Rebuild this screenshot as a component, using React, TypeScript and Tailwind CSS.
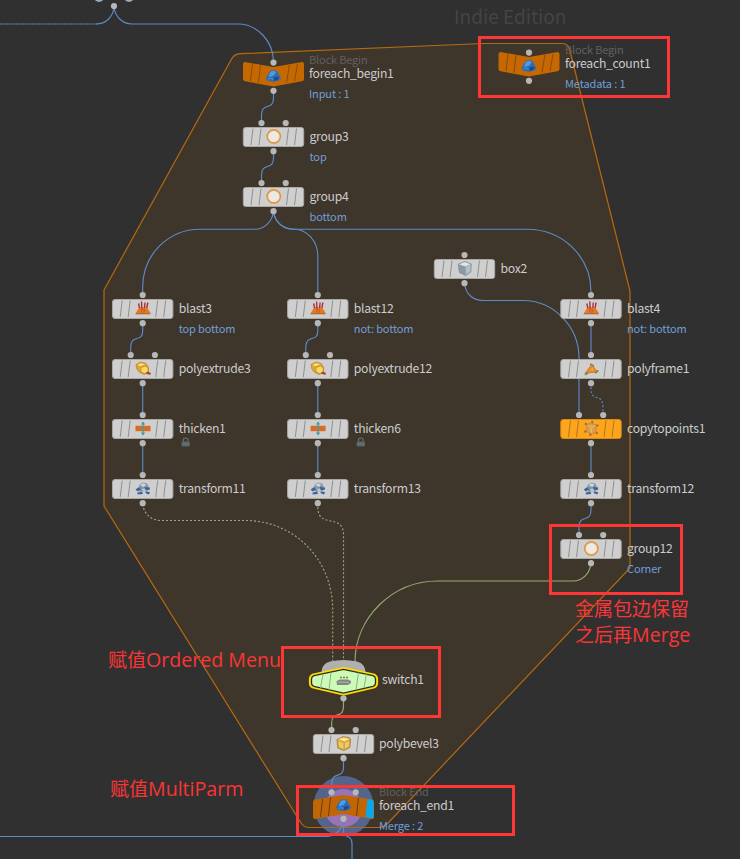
import React from "react";

type Kind = "group" | "blast" | "extrude" | "thicken" | "transform" | "box" | "frame" | "copy" | "bevel";
type NodeInfo = { name: string; x: number; y: number; kind: Kind; ins: number; note?: string; lock?: boolean };

const nodes: NodeInfo[] = [
  { name: "group3", x: 273.5, y: 137, kind: "group", ins: 2, note: "top" },
  { name: "group4", x: 273.5, y: 197, kind: "group", ins: 2, note: "bottom" },
  { name: "blast3", x: 142.7, y: 309, kind: "blast", ins: 1, note: "top bottom" },
  { name: "polyextrude3", x: 142.7, y: 369, kind: "extrude", ins: 2 },
  { name: "thicken1", x: 142.7, y: 429, kind: "thicken", ins: 1, lock: true },
  { name: "transform11", x: 142.7, y: 489, kind: "transform", ins: 1 },
  { name: "blast12", x: 317.8, y: 309, kind: "blast", ins: 1, note: "not: bottom" },
  { name: "polyextrude12", x: 317.8, y: 369, kind: "extrude", ins: 2 },
  { name: "thicken6", x: 317.8, y: 429, kind: "thicken", ins: 1, lock: true },
  { name: "transform13", x: 317.8, y: 489, kind: "transform", ins: 1 },
  { name: "box2", x: 464.5, y: 269, kind: "box", ins: 1 },
  { name: "blast4", x: 591, y: 309, kind: "blast", ins: 1, note: "not: bottom" },
  { name: "polyframe1", x: 591, y: 369, kind: "frame", ins: 1 },
  { name: "copytopoints1", x: 591, y: 429, kind: "copy", ins: 2 },
  { name: "transform12", x: 591, y: 489, kind: "transform", ins: 1 },
  { name: "group12", x: 591, y: 549, kind: "group", ins: 2, note: "Corner" },
  { name: "polybevel3", x: 343.5, y: 744, kind: "bevel", ins: 2 },
];

const blueWires = [
  "M114 7C113 17 106 24 96 24",
  "M114 7C115 17 123 24 132 24H238C258 24 273.5 42 273.5 62",
  "M273.5 91V98C273.5 111 261.5 102 261.5 115V123",
  "M273.5 151V158C273.5 171 261.5 162 261.5 175V183",
  "M273.5 212C272 222 264 229.2 255 229.2H200C168 229.2 142.7 255 142.7 287V295",
  "M273.5 212C275 222 283 229 293 229C307 229 317.8 241 317.8 256V295",
  "M273.5 212C275 222 283 229.2 293 229.2H527C562 229.2 591 256 591 292",
  "M142.7 323V331C142.7 343 130.7 334 130.7 347V355",
  "M317.8 323V331C317.8 343 305.8 334 305.8 347V355",
  "M142.7 383V415", "M142.7 443V475", "M317.8 383V415", "M317.8 443V475",
  "M464.5 284C466 294 473 300.5 483 300.5H523C554 300.5 579 327 579 358V415",
  "M591 323V355", "M591 443V475",
  "M591 503V510C591 523 579 514 579 527V535",
];

const red = "absolute border-[3px] border-[#ff3636]";
const note = "absolute whitespace-nowrap leading-[26px] text-[#fa3535] font-['Open_Sans','Noto_Sans_CJK_SC',sans-serif]";

function Dot({ x, y }: { x: number; y: number }) {
  return <circle cx={x} cy={y} r="3.1" fill="#b7b7b7" />;
}

function Glyph({ kind }: { kind: Kind }) {
  switch (kind) {
    case "group":
      return <><circle r="6.5" fill="#ede9e3" stroke="#dc9a48" strokeWidth="1.9" /><circle r="5.3" fill="none" stroke="#f3dfc8" strokeWidth=".7" /></>;
    case "blast":
      return <>
        <path d="M-7.5 5L-4-1L-1-1.5L1-1L4-1L7.5 4.5L6.5 5.5H-7Z" fill="#e17926" />
        <path d="M-3.5-.5L-4.5-5M-1.2 0L-1.5-7M1.5-.5L2-6M3.8-.5L4.8-6" stroke="#a8323a" strokeWidth="1.4" />
        <path d="M-1.5 3.5V1H1.5V3.5Z" fill="none" stroke="#c0592c" strokeWidth=".8" />
        <path d="M-7.5 5.3H7.5" stroke="#ad5b28" strokeWidth=".9" />
      </>;
    case "extrude":
      return <>
        <path d="M-7-4L-2-6.5L3-5L5.5-1V4L1 6L-4 3.5L-6.5 0Z" fill="#e3a52c" stroke="#ad8029" strokeWidth=".7" />
        <path d="M-2-1L3-2.5L5 0V4L1 5L-2 3Z" fill="#fbd96d" stroke="#b68425" strokeWidth=".6" />
        <path d="M-5.5-3.5L-2-5.2L2-4.2L-2.5-2.5Z" fill="#ffe391" />
        <path d="M3.5 4L7.5 5.5" stroke="#a63d2b" strokeWidth="2.4" />
      </>;
    case "thicken":
      return <>
        <rect x="-7.5" y="-2.7" width="15" height="5.4" fill="#dc6b20" />
        <rect x="-3.5" y="-1.7" width="7" height="3.4" fill="#b77842" />
        <path d="M0-6V6" stroke="#6a9087" strokeWidth="1.4" />
        <path d="M-2.2-4L0-7L2.2-4ZM-2.2 4L0 7L2.2 4Z" fill="#42a0a3" />
      </>;
    case "transform":
      return <>
        <path d="M-4.5 1L-3.5-4L0-6L4-5L5.5-2L4.5 3L-3 3Z" fill="#8497aa" />
        <path d="M-3-3.5L0-5.2L3-4L1-1.5Z" fill="#ced8dc" />
        <path d="M-7.5 1L-4-1.5L-2 1L-5.5 3ZM1.5-1.5L7-1L6.5 1.5L2 1.5ZM-5.5 4L-1 3L0 5.5L-5.5 6ZM2 3L7 3.5L6 6L3 5Z" fill="#3e6597" />
        <path d="M-1 .5L2 0L3 3L0 3Z" fill="#b9c9d6" />
      </>;
    case "box":
      return <>
        <path d="M-6.5-4.5L0-7L6.5-4.5L6 3.5L1 7L-5.5 4Z" fill="#8b99a5" stroke="#7b8991" strokeWidth=".7" />
        <path d="M-5.8-4.3L0-6.4L5.8-4.3L.5-2Z" fill="#dfe5e7" />
        <path d="M.8-1.5L6-4L5.5 3.2L1 6.2Z" fill="#b4bfc7" />
      </>;
    case "frame":
      return <>
        <path d="M-6.5 6L-3 4.5M-1-4.5L2.5-2M3.5 4.5L7 2" stroke="#668745" strokeWidth="1.8" />
        <path d="M-6 4.5L.5-4L6 3.5Z" fill="#e98a2b" stroke="#b9752f" strokeWidth=".8" />
        <path d="M-1 2L1-1.5L3 2Z" fill="#f3a346" />
      </>;
    case "copy":
      return <>
        <path d="M-4.5-4L0-5.5L5-3.5L4.5 4L0 5.5L-4.5 3Z" fill="#dc9f45" stroke="#b98140" strokeWidth=".8" />
        <path d="M-3.5-3L0-1.5L4-2.8M0-1V4.5" stroke="#efbb6a" fill="none" />
        {[[-5.5, -4.5], [1, -6.5], [6, -3], [5.5, 4.5], [-1, 6.3], [-6, 3]].map(([x, y]) => <circle key={`${x}${y}`} cx={x} cy={y} r="1.2" fill="#9a7440" />)}
      </>;
    case "bevel":
      return <>
        <path d="M-6.8-4L-1-6.8L5.5-6L6.8-4L6 4L0 7L-6 4.5Z" fill="#d5a744" stroke="#a07f3a" strokeWidth=".9" />
        <path d="M-5.8-4.2L0-6L5.6-4.6L.8-2Z" fill="#fbe394" />
        <path d="M-5.3-2.3L-.5-.4L-.5 5.4L-4.8 3.4ZM1.2-.4L5.5-2.6L4.8 3L1.2 5.2Z" fill="#efc868" />
      </>;
  }
}

function Rock() {
  return <>
    <path d="M-7.5 2.5L-5.5-1.5L-3-5L1-6L4-4L5.5-1L7.5 2.5L5 5L0 6L-6 5Z" fill="#2b6cba" />
    <path d="M-3-4L1-5.2L2.5-3L0 0L-5 1.5L-4-1.5Z" fill="#5598dc" />
    <path d="M1 1.5L5.5 1L4 4.2L0 5Z" fill="#1d4788" />
    <path d="M-5.5 3.5L-1.5 2.5L-.5 4.5" stroke="#4e8fd2" fill="none" />
  </>;
}

function Stripes({ color }: { color: string }) {
  return <path d="M-20.5-8.5L-22.5 8M-12.5-8.5L-14.5 8M15-8.5L13 8M23-8.5L21 8" stroke={color} strokeWidth="1" fill="none" />;
}

function BlockBegin({ x, y }: { x: number; y: number }) {
  return <>
    <g transform={`translate(${x} ${y})`}>
      <path d="M-28.5-12L0-7L28.5-12Q30.5-12 30.5-10V5Q30.5 7 28.5 7.3L0 12.4L-28.5 7.3Q-30.5 7-30.5 5V-10Q-30.5-12-28.5-12Z" fill="#c56800" />
      <path d="M-21-10L-23 7M-13-9L-15 8.5M16-9L13 8.5M24-10L21 7" stroke="#8a4b0b" strokeWidth="1" />
      <g transform="translate(0 1.7)"><Rock /></g>
    </g>
    <Dot x={x} y={y - 11.4} /><Dot x={x} y={y + 16.8} />
  </>;
}

function GraphNode({ n }: { n: NodeInfo }) {
  const orange = n.kind === "copy";
  return <>
    <g transform={`translate(${n.x} ${n.y})`}>
      <rect x="-30.2" y="-9.5" width="60.4" height="19" rx="2.5" fill={orange ? "#ffa51b" : "#cfcfcf"} stroke={orange ? "#d88b16" : "#aaa7a4"} strokeWidth="1" />
      <Stripes color={orange ? "#ad761f" : "#8f8f8f"} />
      <g transform="translate(.3 -.5)"><Glyph kind={n.kind} /></g>
    </g>
    {n.ins === 1 ? <Dot x={n.x} y={n.y - 14} /> : <><Dot x={n.x - 12} y={n.y - 14} /><Dot x={n.x + 12.2} y={n.y - 14} /></>}
    <Dot x={n.x} y={n.y + 14.2} />
  </>;
}

function Label({ x, y, name, tag, info }: { x: number; y: number; name: string; tag?: string; info?: string }) {
  return <div className="absolute flex flex-col whitespace-nowrap font-['Noto_Sans_CJK_SC',sans-serif]" style={{ left: x, top: y }}>
    {tag && <span className="text-[11px] leading-[13px] tracking-[-0.17px] text-[#606060]">{tag}</span>}
    <span className="text-[12.2px] leading-[14px] tracking-[-0.26px] text-[#cccccc]">{name}</span>
    {info && <span className="mt-[6px] text-[11px] leading-[14px] tracking-[-0.13px] text-[#719fd8]">{info}</span>}
  </div>;
}

export default function App() {
  return <main className="relative h-[859px] w-[740px] overflow-hidden bg-[#303030]">
    <div className="absolute left-[454px] top-[2px] whitespace-nowrap font-['Noto_Sans_CJK_SC',sans-serif] text-[19px] leading-[28px] text-[#444444]">Indie Edition</div>

    <svg className="absolute inset-0" width="740" height="859" viewBox="0 0 740 859" fill="none">
      <path d="M104 290L231 60Q234 54 240 53.7L483 43.5H562Q568 43.5 569.5 49L630 291V568L389 822Q384 827.5 379 827.5H309Q304 827.5 301 823L104 506Z" fill="#3e352b" stroke="#b7690f" strokeWidth="1.2" />
      <circle cx="343.5" cy="806" r="30" fill="#53658d" />
      <circle cx="343.5" cy="808" r="19" fill="#9873b5" />
      <path d="M309 827.5H379" stroke="#b7690f" strokeWidth="1.2" />
      <g stroke="#5d8bc5" strokeWidth="1.15">
        {blueWires.map((d) => <path key={d} d={d} />)}
        <path d="M0 24H97" strokeDasharray="2.5 .7" />
        <path d="M591 383V388C591 404 603 391 603 408V415" strokeDasharray="2 2" />
        <path d="M343.5 758V767C343.5 780 331.7 770 331.7 784V792" />
        <path d="M343.5 820C342 830 335 836.5 326 836.5H0M343.5 820V832C343.5 838 352 834 352 844V859" />
      </g>
      <g stroke="#93ad71" strokeWidth="1.15">
        <path d="M142.7 504C144 514 151 520.5 161 520.5H245C295 520.5 332.7 560 332.7 610V662M317.8 503V507C318 530 343.5 512 343.5 535V662" strokeDasharray="2 2" />
        <path d="M591 563C590 574 582 581 573 581H438C392 581 355 618 355 662M343.5 698V706C343.5 720 331.7 710 331.7 723V730" />
      </g>
      <circle cx="99" cy="-3" r="5" fill="#94adba" /><circle cx="129" cy="-3" r="5" fill="#94adba" />
      <Dot x={114} y={6} />

      <BlockBegin x={273.5} y={74} />
      <BlockBegin x={529} y={64} />
      {nodes.map((n) => <GraphNode key={n.name} n={n} />)}

      {nodes.filter((n) => n.lock).map((n) => <g key={n.name} transform={`translate(${n.x + 43} 442)`}>
        <path d="M-2.3-.5V-2Q-2.3-4 0-4Q2.3-4 2.3-2V-.5" stroke="#66716f" strokeWidth="1.2" />
        <rect x="-4" y="-.5" width="8" height="5" fill="#586866" /><path d="M-4 2H4" stroke="#71807c" strokeWidth=".7" />
      </g>)}

      <path d="M321.5 672Q321.5 664 330 661.5Q343.5 658.5 357 661.5Q365.5 664 365.5 672Z" fill="#b1b0b0" />
      <path d="M313.5 675L343.5 668.5L373.5 675Q376.5 676.5 376.5 679V683Q376.5 686 373.5 687L343.5 694L313.5 687Q310.5 686 310.5 683V679Q310.5 676.5 313.5 675Z" fill="#ccfbb8" stroke="#ffdb0a" strokeWidth="3.2" strokeLinejoin="round" />
      <path d="M314 675.7L343.5 669.3L373 675.7Q375.5 676.7 375.5 679V683Q375.5 685.5 373 686.3L343.5 693.2L314 686.3Q311.5 685.5 311.5 683V679Q311.5 676.7 314 675.7Z" fill="#ccfbb8" stroke="#253015" strokeWidth="1.3" />
      <path d="M323 674L320.5 688M331 672.5L329 690M358.5 672.5L356 690M366.5 674L364 688" stroke="#91b184" />
      <path d="M336.5 681L340 679.5H348L351 681V683L348 685H337Z" fill="#838781" />
      <path d="M338 682.2H349" stroke="#b1b5ae" /><path d="M340 677.5H342M343 677.5H345M346 677.5H348" stroke="#90794c" strokeWidth="1.5" />
      <Dot x={343.5} y={698.3} />

      <g transform="translate(343.5 806)">
        <path d="M-28.5-6.5L0-11L28.5-6.5Q30.5-6 30.5-4V11Q30.5 13.3 28.5 13L0 8L-28.5 13Q-30.5 13.3-30.5 11V-4Q-30.5-6-28.5-6.5Z" fill="#c16605" />
        <path d="M-21-7L-23 11M-13-8.5L-15 10M15-8.5L13 10" stroke="#713c11" />
        <path d="M24-7L29-6Q30-5.5 30-4V10.5Q30 12.5 28 12.2L22 11Z" fill="#05a9ef" />
        <g transform="translate(0 -1)"><Rock /></g>
      </g>
      <Dot x={331.5} y={792.3} /><Dot x={355.7} y={792.3} /><Dot x={343.5} y={818.8} />
    </svg>

    {nodes.map((n) => <Label key={n.name} x={n.x + (n.kind === "bevel" ? 35.5 : 36)} y={n.y - 8} name={n.name} info={n.note} />)}
    <Label x={309} y={53} name="foreach_begin1" tag="Block Begin" info="Input : 1" />
    <Label x={565} y={43} name="foreach_count1" tag="Block Begin" info="Metadata : 1" />
    <Label x={382} y={672} name="switch1" />
    <Label x={379} y={785} name="foreach_end1" tag="Block End" info="Merge : 2" />

    <div className={`${red} left-[478px] top-[36px] h-[62px] w-[192px]`} />
    <div className={`${red} left-[549px] top-[524px] h-[71px] w-[134px]`} />
    <div className={`${red} left-[281px] top-[646px] h-[72px] w-[160px]`} />
    <div className={`${red} left-[296px] top-[785px] h-[51px] w-[219px]`} />
    <div className={`${note} left-[575px] top-[596px] text-[19px]`}>金属包边保留<br />之后再<span className="text-[19.6px]">Merge</span></div>
    <div className={`${note} left-[108px] top-[647px] text-[19px]`}>赋值<span className="text-[19.6px]">Ordered Menu</span></div>
    <div className={`${note} left-[110px] top-[776px] text-[19px]`}>赋值<span className="text-[19.6px]">MultiParm</span></div>
  </main>;
}
